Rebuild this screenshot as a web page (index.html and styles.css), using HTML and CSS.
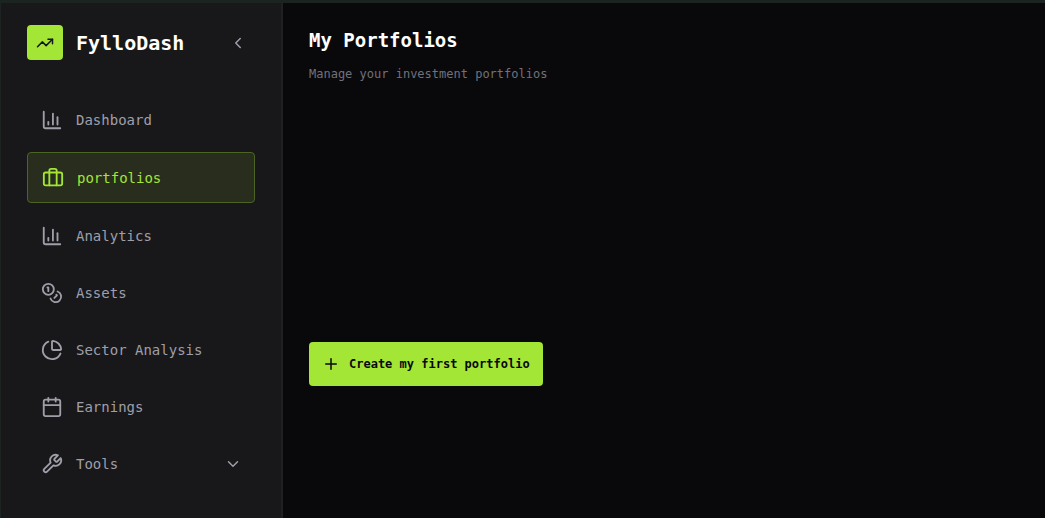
FILE: index.html
```html
<!DOCTYPE html>
<html lang="en">
<head>
  <meta charset="UTF-8">
  <meta name="viewport" content="width=device-width, initial-scale=1.0">
  <title>FylloDash - My Portfolios</title>
  <link rel="stylesheet" href="styles.css">
</head>
<body>

  <aside class="sidebar">
    <div class="brand">
      <span class="brand-logo">
        <svg class="icon icon-sm" viewBox="0 0 24 24"><path d="M22 7 13.5 15.5 8.5 10.5 2 17"/><path d="M16 7h6v6"/></svg>
      </span>
      <span class="brand-name">FylloDash</span>
      <button class="collapse" type="button" aria-label="Collapse sidebar">
        <svg class="icon icon-sm" viewBox="0 0 24 24"><path d="m15 18-6-6 6-6"/></svg>
      </button>
    </div>

    <nav class="nav">
      <a class="nav-item" href="#">
        <svg class="icon" viewBox="0 0 24 24"><path d="M3 3v16a2 2 0 0 0 2 2h16"/><path d="M18 17V9"/><path d="M13 17V5"/><path d="M8 17v-3"/></svg>
        Dashboard
      </a>
      <a class="nav-item active" href="#" aria-current="page">
        <svg class="icon" viewBox="0 0 24 24"><path d="M16 20V4a2 2 0 0 0-2-2h-4a2 2 0 0 0-2 2v16"/><rect width="20" height="14" x="2" y="6" rx="2"/></svg>
        portfolios
      </a>
      <a class="nav-item" href="#">
        <svg class="icon" viewBox="0 0 24 24"><path d="M3 3v16a2 2 0 0 0 2 2h16"/><path d="M18 17V9"/><path d="M13 17V5"/><path d="M8 17v-3"/></svg>
        Analytics
      </a>
      <a class="nav-item" href="#">
        <svg class="icon" viewBox="0 0 24 24"><circle cx="8" cy="8" r="6"/><path d="M18.09 10.37A6 6 0 1 1 10.34 18"/><path d="M7 6h1v4"/><path d="m16.71 13.88.7.71-2.82 2.82"/></svg>
        Assets
      </a>
      <a class="nav-item" href="#">
        <svg class="icon" viewBox="0 0 24 24"><path d="M21 12c.552 0 1.005-.449.95-.998a10 10 0 0 0-8.953-8.951c-.55-.055-.998.398-.998.95v8a1 1 0 0 0 1 1z"/><path d="M21.21 15.89A10 10 0 1 1 8 2.83"/></svg>
        Sector Analysis
      </a>
      <a class="nav-item" href="#">
        <svg class="icon" viewBox="0 0 24 24"><path d="M8 2v4"/><path d="M16 2v4"/><rect width="18" height="18" x="3" y="4" rx="2"/><path d="M3 10h18"/></svg>
        Earnings
      </a>
      <button class="nav-item" type="button" aria-expanded="false">
        <svg class="icon" viewBox="0 0 24 24"><path d="M14.7 6.3a1 1 0 0 0 0 1.4l1.6 1.6a1 1 0 0 0 1.4 0l3.77-3.77a6 6 0 0 1-7.94 7.94l-6.91 6.91a2.12 2.12 0 0 1-3-3l6.91-6.91a6 6 0 0 1 7.94-7.94l-3.76 3.76z"/></svg>
        Tools
        <svg class="icon icon-sm chevron" viewBox="0 0 24 24"><path d="m6 9 6 6 6-6"/></svg>
      </button>
    </nav>
  </aside>

  <main class="content">
    <h1>My Portfolios</h1>
    <p class="subtitle">Manage your investment portfolios</p>

    <div class="empty">
      <button class="create" type="button">
        <svg class="icon icon-sm" viewBox="0 0 24 24"><path d="M5 12h14"/><path d="M12 5v14"/></svg>
        Create my first portfolio
      </button>
    </div>
  </main>

</body>
</html>
```
FILE: styles.css
```css
* {
  box-sizing: border-box;
}

body {
  margin: 0;
  min-height: 100vh;
  display: flex;
  border-top: 3px solid #1c2422;
  border-left: 1px solid #1c2422;
  background-color: #09090b;
  color: #ffffff;
  font-family: Consolas, 'DejaVu Sans Mono', monospace;
  font-size: 14px;
}

button {
  border: none;
  background: none;
  color: inherit;
  font: inherit;
  cursor: pointer;
}

.icon {
  width: 22px;
  height: 22px;
  flex-shrink: 0;
  fill: none;
  stroke: currentColor;
  stroke-width: 2;
  stroke-linecap: round;
  stroke-linejoin: round;
}

.icon-sm {
  width: 18px;
  height: 18px;
}

/* sidebar */
.sidebar {
  width: 282px;
  flex-shrink: 0;
  padding: 22px 26px;
  background-color: #18181b;
  border-right: 2px solid #202023;
}

.brand {
  display: flex;
  align-items: center;
  gap: 13px;
  margin-bottom: 35px;
}

.brand-logo {
  width: 36px;
  height: 35px;
  display: flex;
  align-items: center;
  justify-content: center;
  border-radius: 4px;
  background-color: #a3e635;
  color: #18181b;
}

.brand-name {
  font-size: 20px;
  font-weight: bold;
}

.collapse {
  display: flex;
  margin-left: auto;
  padding: 8px;
  color: #9f9fa9;
}

.nav {
  display: flex;
  flex-direction: column;
  gap: 8px;
}

.nav-item {
  display: flex;
  align-items: center;
  gap: 13px;
  min-height: 49px;
  padding: 13px 13px 13px 14px;
  border-radius: 4px;
  color: #9f9fa9;
  text-align: left;
  text-decoration: none;
}

.nav-item.active {
  min-height: 51px;
  border: 1px solid #4b6522;
  background-color: #282d1d;
  color: #a3e635;
}

.chevron {
  margin-left: auto;
}

/* main */
.content {
  flex: 1;
  padding: 23px 26px;
}

.content h1 {
  margin: 0;
  font-size: 19px;
  line-height: 28px;
}

.subtitle {
  margin: 10px 0 0;
  color: #71717b;
  font-size: 12px;
  line-height: 20px;
}

.empty {
  padding-top: 258px;
}

.create {
  display: flex;
  align-items: center;
  gap: 9px;
  min-height: 44px;
  padding: 13px;
  border-radius: 4px;
  background-color: #a3e635;
  color: #09090b;
  font-size: 12px;
  font-weight: bold;
}
```
